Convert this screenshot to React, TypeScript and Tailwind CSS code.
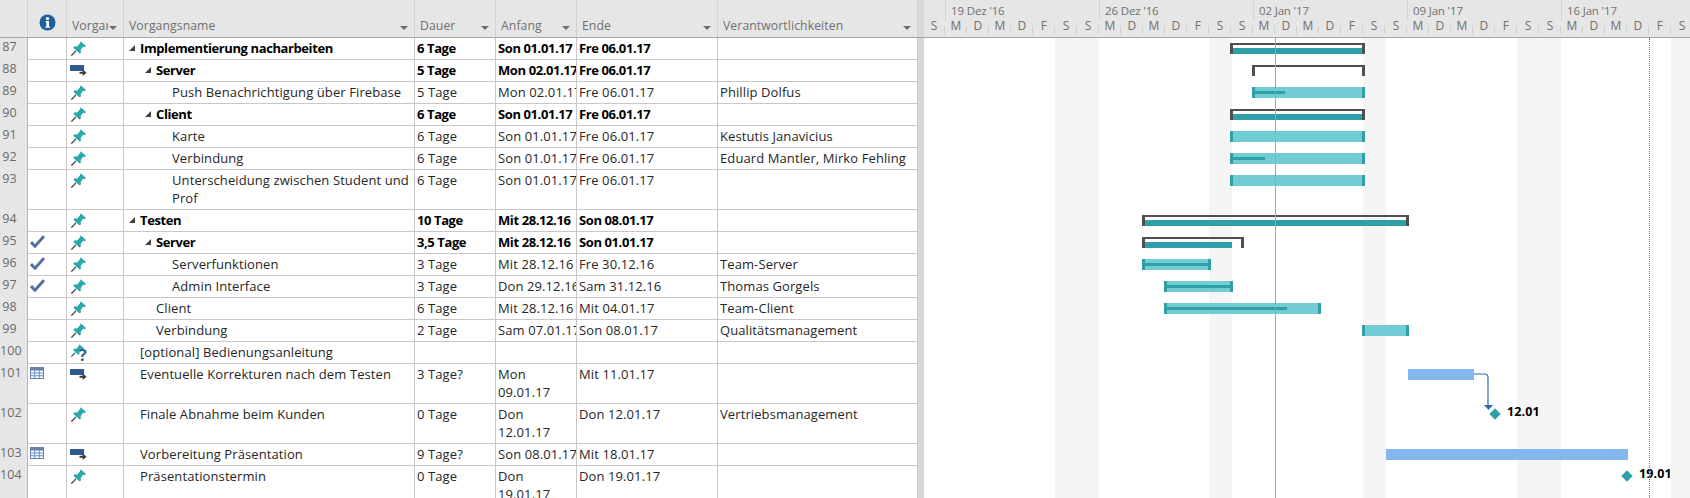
const FONT = "font-['Open_Sans','Noto_Sans',sans-serif]"
const BOLD = "font-bold tracking-[-0.4px] text-black"

type Row = {
  id: number
  h: number
  icon: "pin" | "auto" | "pinq"
  info?: "check" | "cal"
  name: string
  indent: number
  bold?: boolean
  toggle?: boolean
  dauer: string
  anfang: string
  ende: string
  res?: string
}

const rows: Row[] = [
  { id: 87, h: 22, icon: "pin", name: "Implementierung nacharbeiten", indent: 16, bold: true, toggle: true, dauer: "6 Tage", anfang: "Son 01.01.17", ende: "Fre 06.01.17" },
  { id: 88, h: 22, icon: "auto", name: "Server", indent: 32, bold: true, toggle: true, dauer: "5 Tage", anfang: "Mon 02.01.17", ende: "Fre 06.01.17" },
  { id: 89, h: 22, icon: "pin", name: "Push Benachrichtigung über Firebase", indent: 48, dauer: "5 Tage", anfang: "Mon 02.01.17", ende: "Fre 06.01.17", res: "Phillip Dolfus" },
  { id: 90, h: 22, icon: "pin", name: "Client", indent: 32, bold: true, toggle: true, dauer: "6 Tage", anfang: "Son 01.01.17", ende: "Fre 06.01.17" },
  { id: 91, h: 22, icon: "pin", name: "Karte", indent: 48, dauer: "6 Tage", anfang: "Son 01.01.17", ende: "Fre 06.01.17", res: "Kestutis Janavicius" },
  { id: 92, h: 22, icon: "pin", name: "Verbindung", indent: 48, dauer: "6 Tage", anfang: "Son 01.01.17", ende: "Fre 06.01.17", res: "Eduard Mantler, Mirko Fehling" },
  { id: 93, h: 40, icon: "pin", name: "Unterscheidung zwischen Student und\nProf", indent: 48, dauer: "6 Tage", anfang: "Son 01.01.17", ende: "Fre 06.01.17" },
  { id: 94, h: 22, icon: "pin", name: "Testen", indent: 16, bold: true, toggle: true, dauer: "10 Tage", anfang: "Mit 28.12.16", ende: "Son 08.01.17" },
  { id: 95, h: 22, icon: "pin", info: "check", name: "Server", indent: 32, bold: true, toggle: true, dauer: "3,5 Tage", anfang: "Mit 28.12.16", ende: "Son 01.01.17" },
  { id: 96, h: 22, icon: "pin", info: "check", name: "Serverfunktionen", indent: 48, dauer: "3 Tage", anfang: "Mit 28.12.16", ende: "Fre 30.12.16", res: "Team-Server" },
  { id: 97, h: 22, icon: "pin", info: "check", name: "Admin Interface", indent: 48, dauer: "3 Tage", anfang: "Don 29.12.16", ende: "Sam 31.12.16", res: "Thomas Gorgels" },
  { id: 98, h: 22, icon: "pin", name: "Client", indent: 32, dauer: "6 Tage", anfang: "Mit 28.12.16", ende: "Mit 04.01.17", res: "Team-Client" },
  { id: 99, h: 22, icon: "pin", name: "Verbindung", indent: 32, dauer: "2 Tage", anfang: "Sam 07.01.17", ende: "Son 08.01.17", res: "Qualitätsmanagement" },
  { id: 100, h: 22, icon: "pinq", name: "[optional] Bedienungsanleitung", indent: 16, dauer: "", anfang: "", ende: "" },
  { id: 101, h: 40, icon: "auto", info: "cal", name: "Eventuelle Korrekturen nach dem Testen", indent: 16, dauer: "3 Tage?", anfang: "Mon\n09.01.17", ende: "Mit 11.01.17" },
  { id: 102, h: 40, icon: "pin", name: "Finale Abnahme beim Kunden", indent: 16, dauer: "0 Tage", anfang: "Don\n12.01.17", ende: "Don 12.01.17", res: "Vertriebsmanagement" },
  { id: 103, h: 22, icon: "auto", info: "cal", name: "Vorbereitung Präsentation", indent: 16, dauer: "9 Tage?", anfang: "Son 08.01.17", ende: "Mit 18.01.17" },
  { id: 104, h: 40, icon: "pin", name: "Präsentationstermin", indent: 16, dauer: "0 Tage", anfang: "Don\n19.01.17", ende: "Don 19.01.17" },
]

const Pin = ({ size = 15 }: { size?: number }) => (
  <svg width={size} height={size} viewBox="0 0 14 14">
    <path d="M0.3 13.7 L4.6 9.2" stroke="#34474a" strokeWidth="1.2" />
    <path d="M9 0.2 L14 4.6 L12.7 5.8 L11.2 5.4 L8.9 8.6 L9.4 10.6 L8 11.6 L2.2 6.4 L3.2 5 L5.6 5.2 L8.4 2.2 Z" fill="#2ba7af" />
  </svg>
)

const AutoIcon = () => (
  <svg width="17" height="12" viewBox="0 0 17 12">
    <rect x="0" y="0" width="14" height="6" fill="#2c5c93" />
    <path d="M9 8 H14" stroke="#fff" strokeWidth="4" />
    <path d="M9.5 7.8 H13.5" stroke="#3c3c3c" strokeWidth="2" />
    <path d="M12.6 4.6 L16.6 7.8 L12.6 11 Z" fill="#3c3c3c" />
  </svg>
)

const PinQuestion = () => (
  <div className="relative -mt-[1px] h-[18px] w-[18px]">
    <Pin size={13} />
    <span className="absolute left-[8px] top-[3px] text-[16px] font-bold leading-[16px] text-[#2c5c93]">?</span>
  </div>
)

const Check = () => (
  <svg width="15" height="13" viewBox="0 0 15 13">
    <path d="M1 7 L5 11.2 L14 1.2" fill="none" stroke="#54709f" strokeWidth="3" />
  </svg>
)

const CalendarIcon = () => (
  <svg width="14" height="12" viewBox="0 0 14 12">
    <rect x="0.5" y="0.5" width="13" height="11" fill="#fff" stroke="#6d7fa8" />
    <rect x="1" y="1" width="12" height="2.5" fill="#6d7fa8" />
    <path d="M1 6 H13 M1 8.8 H13 M4.7 3.5 V11 M9.2 3.5 V11" stroke="#5a8fd0" strokeWidth="1" />
  </svg>
)

const InfoIcon = () => (
  <svg width="17" height="17" viewBox="0 0 17 17">
    <circle cx="8.5" cy="8.5" r="8" fill="#1f5f9e" />
    <circle cx="8.5" cy="4.6" r="1.7" fill="#fff" />
    <path d="M6.6 7 H10 V12.4 H11 V13.8 H6.4 V12.4 H7.4 V8.4 H6.6 Z" fill="#fff" />
  </svg>
)

const Arrow = () => (
  <span className="h-0 w-0 border-x-[4px] border-t-[4px] border-x-transparent border-t-[#6e6e6e]" />
)

const Toggle = () => (
  <svg width="6" height="6" viewBox="0 0 6 6" className="mr-[5px] shrink-0">
    <path d="M0 6 L6 0 V6 Z" fill="#404040" />
  </svg>
)

const HeaderCell = ({ label, className }: { label: string; className: string }) => (
  <div className={`flex items-end justify-between overflow-hidden border-r border-[#d2d2d2] pb-[2px] pl-[5px] pr-[6px] ${className}`}>
    <span className="min-w-0 overflow-hidden whitespace-nowrap text-[12.2px] leading-[18px]">{label}</span>
    <span className="mb-[5px] ml-[1px] flex shrink-0"><Arrow /></span>
  </div>
)

const Cell = ({ children, className }: { children?: React.ReactNode; className: string }) => (
  <div className={`shrink-0 overflow-hidden whitespace-pre border-r border-[#c8c8c8] pl-[2px] pt-[1px] ${className}`}>
    {children}
  </div>
)

const days = ["S", "M", "D", "M", "D", "F", "S", "S", "M", "D", "M", "D", "F", "S", "S", "M", "D", "M", "D", "F", "S", "S", "M", "D", "M", "D", "F", "S", "S", "M", "D", "M", "D", "F", "S"]
const weeks = [
  { label: "19 Dez '16", x: 22 },
  { label: "26 Dez '16", x: 176 },
  { label: "02 Jan '17", x: 330 },
  { label: "09 Jan '17", x: 484 },
  { label: "16 Jan '17", x: 638 },
]

// gantt x values are page coordinates, shifted by the chart's left edge
const X0 = 924
const shades = [[1055, 1099], [1209, 1232], [1363, 1386], [1517, 1561], [1671, 1690]]

const Summary = ({ y, x1, x2, fill }: { y: number; x1: number; x2: number; fill?: number }) => (
  <>
    <div className="absolute h-[2px] bg-[#505050]" style={{ left: x1 - X0, top: y, width: x2 - x1 }} />
    <div className="absolute h-[11px] w-[3px] bg-[#505050]" style={{ left: x1 - X0, top: y }} />
    <div className="absolute h-[11px] w-[3px] bg-[#505050]" style={{ left: x2 - X0 - 3, top: y }} />
    {fill !== undefined && (
      <div className="absolute h-[6px] bg-[#2fa0a8]" style={{ left: x1 - X0 + 3, top: y + 5, width: fill - x1 - 3 }} />
    )}
  </>
)

const Task = ({ y, x1, x2, progress }: { y: number; x1: number; x2: number; progress?: number }) => (
  <>
    <div className="absolute h-[11px] bg-[#72ccd4]" style={{ left: x1 - X0, top: y, width: x2 - x1 }} />
    <div className="absolute h-[11px] w-[3px] bg-[#2fa0a8]" style={{ left: x1 - X0, top: y }} />
    <div className="absolute h-[11px] w-[3px] bg-[#2fa0a8]" style={{ left: x2 - X0 - 3, top: y }} />
    {progress !== undefined && (
      <div className="absolute h-[3px] bg-[#2fa0a8]" style={{ left: x1 - X0, top: y + 4, width: progress - x1 }} />
    )}
  </>
)

const Milestone = ({ x, y, label }: { x: number; y: number; label: string }) => (
  <>
    <div className="absolute h-[8px] w-[8px] rotate-45 bg-[#2fa0a8]" style={{ left: x - X0 - 4, top: y - 4 }} />
    <span className="absolute text-[12.5px] font-bold leading-[16px] text-black" style={{ left: x - X0 + 12, top: y - 10 }}>{label}</span>
  </>
)

const Gantt = () => (
  <div className="relative h-full min-w-0 flex-1 overflow-hidden bg-white">
    {shades.map(([a, b]) => (
      <div key={a} className="absolute bottom-0 top-0 bg-[#f5f5f6]" style={{ left: a - X0, width: b - a }} />
    ))}
    <Summary y={5} x1={1230} x2={1365} fill={1362} />
    <Summary y={27} x1={1252} x2={1365} />
    <Task y={49} x1={1252} x2={1365} progress={1285} />
    <Summary y={71} x1={1230} x2={1365} fill={1362} />
    <Task y={93} x1={1230} x2={1365} />
    <Task y={115} x1={1230} x2={1365} progress={1265} />
    <Task y={137} x1={1230} x2={1365} />
    <Summary y={177} x1={1142} x2={1409} fill={1406} />
    <Summary y={199} x1={1142} x2={1244} fill={1232} />
    <Task y={221} x1={1142} x2={1211} progress={1211} />
    <Task y={243} x1={1164} x2={1233} progress={1233} />
    <Task y={265} x1={1164} x2={1321} progress={1287} />
    <Task y={287} x1={1362} x2={1409} />
    <div className="absolute h-[11px] bg-[#84b7ed]" style={{ left: 1408 - X0, top: 331, width: 66 }} />
    <svg className="absolute" style={{ left: 1470 - X0, top: 329 }} width="30" height="50" viewBox="0 0 30 50">
      <path d="M4 7 H14.5 Q18 7 18 10.5 V38" fill="none" stroke="#2f6cb5" strokeWidth="1.2" />
      <path d="M14 38 H23 L18.5 43 Z" fill="#2f6cb5" />
    </svg>
    <Milestone x={1495} y={376} label="12.01" />
    <div className="absolute h-[11px] bg-[#84b7ed]" style={{ left: 1386 - X0, top: 411, width: 242 }} />
    <Milestone x={1627} y={438} label="19.01" />
    <div className="absolute bottom-0 top-0 w-px bg-[#86b89a]" style={{ left: 1275 - X0 }} />
    <div className="absolute bottom-0 top-0 w-0 border-l border-dotted border-[#777]" style={{ left: 1649 - X0 }} />
  </div>
)

export default function App() {
  return (
    <div className={`flex h-[498px] w-[1690px] flex-col overflow-hidden bg-white text-[13px] leading-[18px] tracking-[0.1px] text-[#262626] ${FONT}`}>
      {/* header */}
      <div className="flex h-[38px] shrink-0 border-b border-[#a6a6a6] bg-[#e6e6e6] text-[#707070]">
        <div className="w-[28px] shrink-0 border-r border-[#d2d2d2]" />
        <div className="flex w-[39px] shrink-0 items-start justify-center border-r border-[#d2d2d2] pt-[14px]">
          <InfoIcon />
        </div>
        <HeaderCell label="Vorgang" className="w-[57px] shrink-0" />
        <HeaderCell label="Vorgangsname" className="w-[291px] shrink-0" />
        <HeaderCell label="Dauer" className="w-[81px] shrink-0" />
        <HeaderCell label="Anfang" className="w-[81px] shrink-0" />
        <HeaderCell label="Ende" className="w-[141px] shrink-0" />
        <HeaderCell label="Verantwortlichkeiten" className="w-[200px] shrink-0" />
        <div className="w-[6px] shrink-0 bg-[#d8d8d8]" />
        <div className="relative min-w-0 flex-1 overflow-hidden">
          {weeks.map((w) => (
            <span key={w.label} className="absolute top-0 whitespace-nowrap border-l border-[#d2d2d2] pl-[5px] pt-[1px] text-[11.5px] leading-[19px] tracking-[-0.15px]" style={{ left: w.x - 1 }}>
              {w.label}
            </span>
          ))}
          <div className="absolute bottom-0 left-[-1px] flex">
            {days.map((d, i) => (
              <span key={i} className="relative h-[20px] w-[22px] shrink-0 text-center text-[12px] leading-[17px]">
                {d}
                <span className="absolute bottom-[3px] right-0 h-[8px] w-px bg-[#d2d2d2]" />
              </span>
            ))}
          </div>
        </div>
      </div>
      {/* body */}
      <div className="flex min-h-0 flex-1">
        <div className="w-[918px] shrink-0">
          {rows.map((r) => (
            <div key={r.id} className="flex border-b border-[#c8c8c8]" style={{ height: r.h }}>
              <div className="-mb-px w-[28px] shrink-0 border-r border-[#b8b8b8] bg-[#e6e6e6] pr-[8px] text-center text-[12.5px] text-[#6a6a6a]">
                {r.id}
              </div>
              <div className="flex w-[39px] shrink-0 justify-start border-r border-[#c8c8c8] pl-[2px] pt-[3px]">
                {r.info === "check" && <Check />}
                {r.info === "cal" && <CalendarIcon />}
              </div>
              <div className="flex w-[57px] shrink-0 border-r border-[#c8c8c8] pl-[4px] pt-[3px]">
                {r.icon === "pin" && <Pin />}
                {r.icon === "auto" && <span className="-ml-[1px] pt-[2px]"><AutoIcon /></span>}
                {r.icon === "pinq" && <PinQuestion />}
              </div>
              <div className={`flex w-[291px] shrink-0 overflow-hidden whitespace-pre border-r border-[#c8c8c8] pt-[1px] ${r.bold ? BOLD : ""}`}>
                <span className="flex shrink-0 items-start justify-end pt-[6px]" style={{ width: r.indent }}>
                  {r.toggle && <Toggle />}
                </span>
                <span>{r.name}</span>
              </div>
              <Cell className={`w-[81px] ${r.bold ? BOLD : ""}`}>{r.dauer}</Cell>
              <Cell className={`w-[81px] ${r.bold ? BOLD : ""}`}>{r.anfang}</Cell>
              <Cell className={`w-[141px] ${r.bold ? BOLD : ""}`}>{r.ende}</Cell>
              <Cell className="w-[200px]">{r.res}</Cell>
            </div>
          ))}
        </div>
        <div className="w-[6px] shrink-0 bg-[#d8d8d8]" />
        <Gantt />
      </div>
    </div>
  )
}
